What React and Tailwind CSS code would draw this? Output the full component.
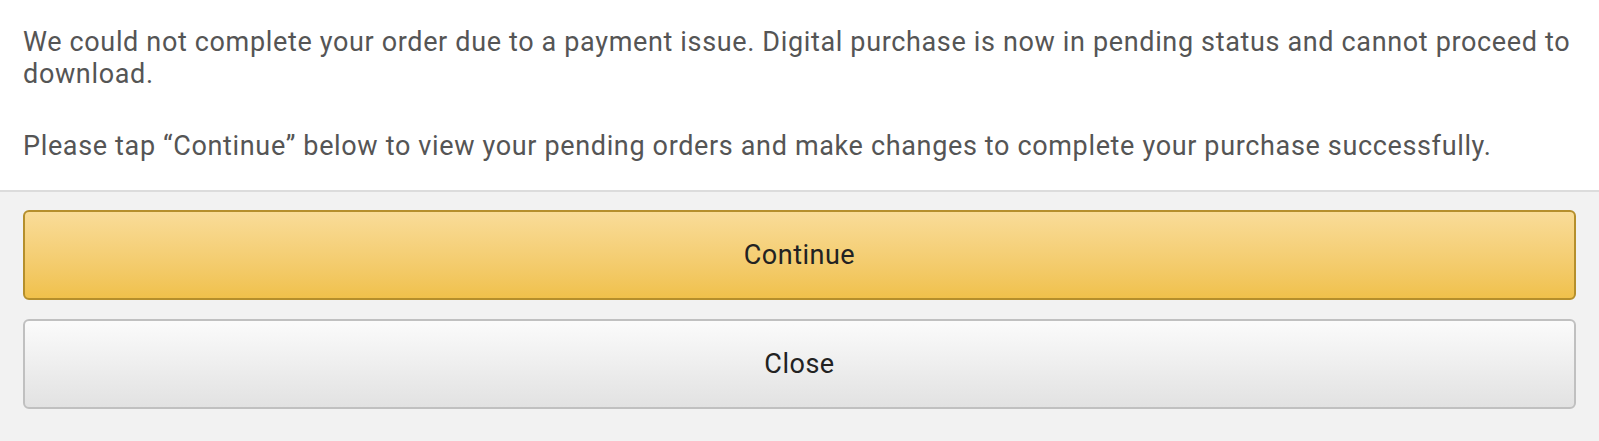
export default function App() {
  return (
    <div className="w-[1599px] h-[441px] bg-[#f2f2f2] font-['Roboto',sans-serif] overflow-hidden">
      <div className="bg-white pl-[23px] pr-[16px] pt-[26px] pb-[28px] border-b-2 border-[#dcdcdc] text-[27px] leading-[32px] tracking-[0.65px] text-[#555555]">
        <p>
          We could not complete your order due to a payment issue. Digital purchase is now in pending status and cannot proceed to download.
        </p>
        <p className="mt-[40px]">
          Please tap “Continue” below to view your pending orders and make changes to complete your purchase successfully.
        </p>
      </div>
      <div className="px-[23px] pt-[18px] flex flex-col gap-[19px]">
        <button className="h-[90px] w-full rounded-[6px] border-2 border-[#b58f2c] bg-gradient-to-b from-[#f9dc98] to-[#f0c14b] text-[27px] tracking-[0.5px] text-[#222222]">
          Continue
        </button>
        <button className="h-[90px] w-full rounded-[6px] border-2 border-[#c0c0c0] bg-gradient-to-b from-[#fbfbfb] to-[#e2e2e2] text-[27px] tracking-[0.5px] text-[#222222]">
          Close
        </button>
      </div>
    </div>
  );
}
